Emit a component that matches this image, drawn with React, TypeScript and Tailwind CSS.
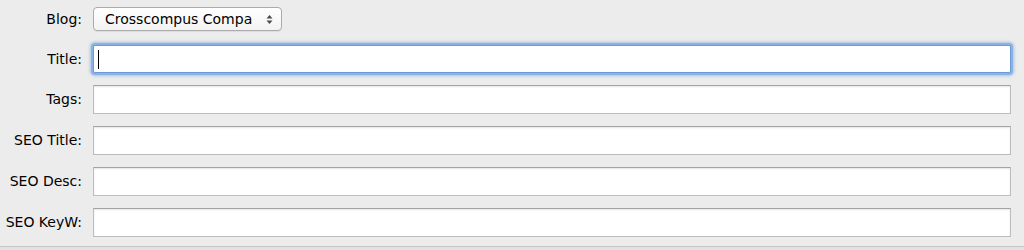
const fields = ["Tags", "SEO Title", "SEO Desc", "SEO KeyW"];

function Label({ text }: { text: string }) {
  return (
    <div className="w-[82px] shrink-0 text-right text-[14px] text-[#000]">{text}:</div>
  );
}

export default function App() {
  return (
    <div
      className="h-[250px] w-[1024px] bg-[#ececec] flex flex-col"
      style={{ fontFamily: '"DejaVu Sans", "Liberation Sans", sans-serif' }}
    >
      <div className="flex flex-col pt-[7px] pr-[13px] h-[247px] border-b border-[#c4c4c4]">
        {/* Blog picker */}
        <div className="flex items-center gap-[11px] h-[24px]">
          <Label text="Blog" />
          <div className="flex items-center h-[24px] w-[189px] rounded-[4px] border border-[#ababab] bg-gradient-to-b from-white to-[#f3f3f3] shadow-[0_1px_0_rgba(0,0,0,0.06)] pl-[11px] pr-[8px]">
            <span className="flex-1 text-[14px] text-[#000] whitespace-nowrap overflow-hidden">
              Crosscompus Compa
            </span>
            <svg width="7" height="11" viewBox="0 0 7 11" className="ml-[4px]">
              <path d="M3.5 1 L6.5 4.5 L0.5 4.5 Z" fill="#4a4a4a" />
              <path d="M3.5 10 L6.5 6.5 L0.5 6.5 Z" fill="#4a4a4a" />
            </svg>
          </div>
        </div>

        {/* Title (focused) */}
        <div className="flex items-center gap-[11px] h-[28px] mt-[14px]">
          <Label text="Title" />
          <div className="flex-1 h-[28px] bg-white border border-[#6d9ad4] rounded-[2px] shadow-[0_0_0_2px_#8ab3e4,0_0_3px_3px_rgba(110,160,220,0.55)] flex items-center pl-[4px]">
            <div className="w-px h-[19px] bg-black" />
          </div>
        </div>

        {fields.map((f) => (
          <div key={f} className="flex items-center gap-[11px] h-[29px] mt-[12px]">
            <Label text={f} />
            <div className="flex-1 h-[29px] bg-white border border-[#bdbdbd] border-t-[#a3a3a3] shadow-[inset_0_1px_2px_rgba(0,0,0,0.1)]" />
          </div>
        ))}
      </div>
      <div className="flex-1 bg-[#e2e2e2]" />
    </div>
  );
}
